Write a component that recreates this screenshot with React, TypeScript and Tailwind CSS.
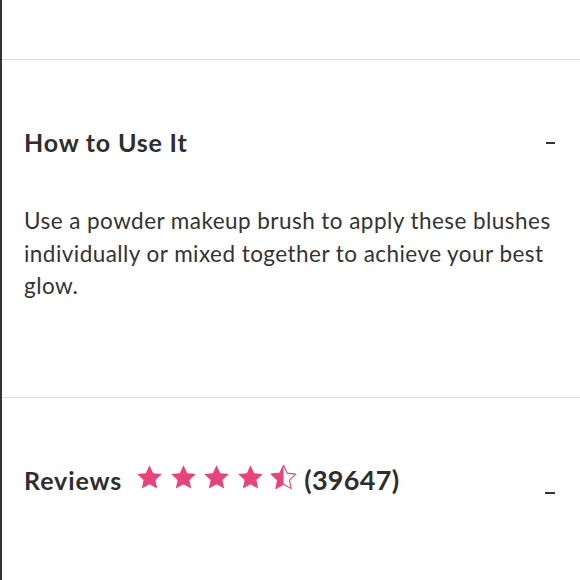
import React from 'react';

function Star({ half = false }: { half?: boolean }) {
  const d = 'M12 1.8l3.05 6.6 7.15.8-5.3 4.9 1.45 7.1L12 17.6l-6.35 3.6 1.45-7.1-5.3-4.9 7.15-.8z';
  return (
    <svg viewBox="0 0 24 24" width={29} height={29} className="shrink-0">
      <defs>
        <clipPath id="halfclip">
          <rect x="0" y="0" width="12" height="24" />
        </clipPath>
      </defs>
      {half ? (
        <>
          <path d={d} fill="none" stroke="#e8437b" strokeWidth={0.9} strokeLinejoin="round" />
          <path d={d} fill="#e8437b" clipPath="url(#halfclip)" />
        </>
      ) : (
        <path d={d} fill="#e8437b" />
      )}
    </svg>
  );
}

export default function App() {
  return (
    <div
      className="w-[580px] h-[580px] overflow-hidden bg-white border-l-2 border-[#333] text-[#333]"
      style={{ fontFamily: 'Lato, "Open Sans", sans-serif' }}
    >
      <div className="h-[60px] border-b border-[#dcdcdc]" />

      <section className="pt-[66px] pb-[94px] pl-[22px] pr-[24px] border-b border-[#dcdcdc]">
        <div className="flex items-start justify-between">
          <h2 className="text-[25px] leading-[32px] font-bold tracking-[0.8px] text-[#2e2e2e]">How to Use It</h2>
          <span className="mt-[16px] mr-[1px] w-[9px] h-[2px] bg-[#333]" />
        </div>
        <p className="mt-[47px] text-[22.5px] leading-[32.5px] tracking-[0.45px]">
          Use a powder makeup brush to apply these blushes individually or mixed together to achieve your best glow.
        </p>
      </section>

      <section className="pt-[66px] pl-[22px] pr-[24px]">
        <div className="flex items-start justify-between">
          <div className="flex items-center h-[32px]">
            <h2 className="text-[25px] leading-[32px] font-bold tracking-[0.9px] text-[#2e2e2e]">Reviews</h2>
            <div className="flex items-center gap-[4.5px] ml-[13px] -mt-[5px]">
              <Star />
              <Star />
              <Star />
              <Star />
              <Star half />
            </div>
            <span className="ml-[6px] text-[27px] leading-[32px] font-bold tracking-[0.3px] text-[#2e2e2e]">(39647)</span>
          </div>
          <span className="mt-[28px] mr-[1px] w-[10px] h-[2px] bg-[#333]" />
        </div>
      </section>
    </div>
  );
}
